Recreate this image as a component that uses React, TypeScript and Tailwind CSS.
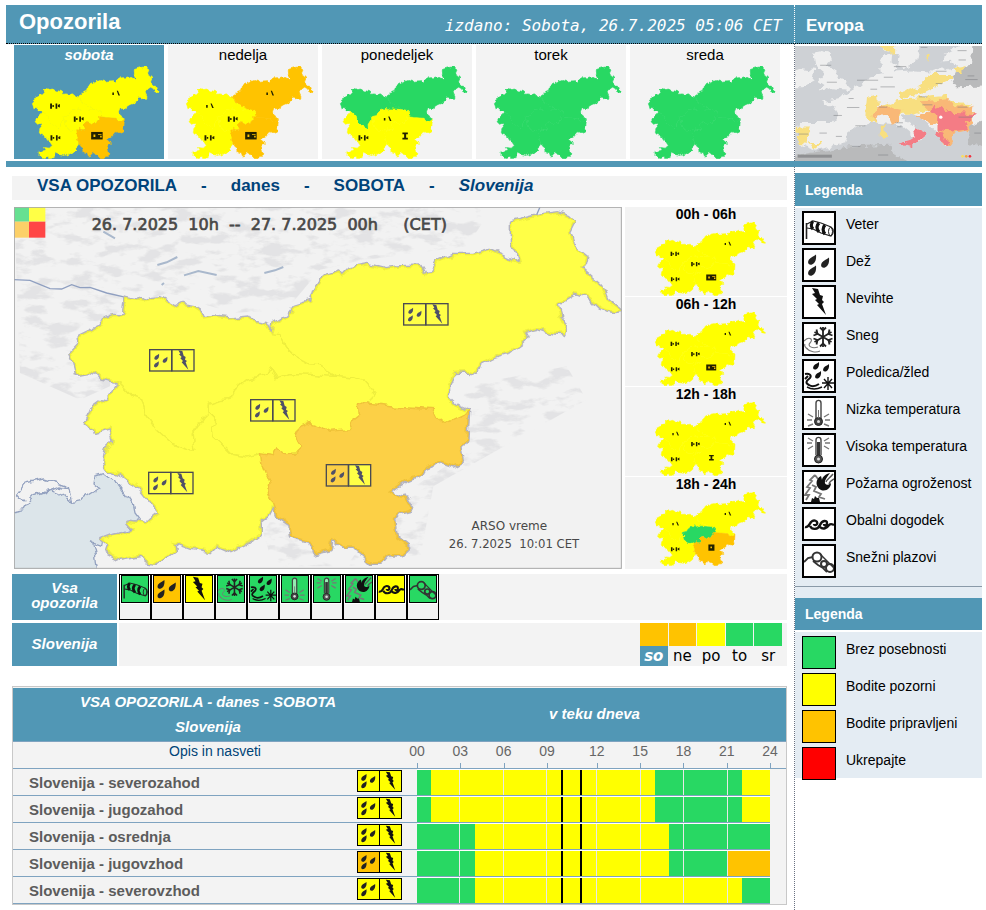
import { useId } from 'react'
import type { ReactNode } from 'react'

type Level = 'green' | 'yellow' | 'orange' | 'red'
type RegionId = 'nw' | 'sw' | 'c' | 'se' | 'ne'
type Mark = 'pair' | 'dots' | 'box' | 'beam' | 'square'

const FILL: Record<Level, string> = {
  green: '#28d863',
  yellow: '#ffff00',
  orange: '#ffc300',
  red: '#ff0000',
}

const SOFT_FILL: Record<Level, string> = {
  green: '#66e091',
  yellow: '#ffff46',
  orange: '#fcd046',
  red: '#ff4646',
}

const BG: Record<Level, string> = {
  green: 'bg-[#28d863]',
  yellow: 'bg-[#ffff00]',
  orange: 'bg-[#ffc300]',
  red: 'bg-[#ff0000]',
}

const REGION_PATHS: Record<RegionId, string> = {
  nw: 'M378 293L430 305L450 297L485 295L535 322L550 315L582 322L598 332L608 355L640 350L690 356L745 350L755 365L798 372L815 402L840 405L860 445L885 470L925 492L960 495L995 517L1000 530L930 524L870 522L830 535L808 500L795 525L740 540L705 570L690 600L660 603L625 615L625 640L610 655L580 700L585 752L560 750L520 735L470 690L435 640L425 600L395 590L352 545L305 535L290 520L260 515L230 520L222 490L210 462L240 430L238 410L300 380L315 355L345 348L370 350Z',
  ne: 'M815 402L822 375L860 352L885 320L935 305L945 270L970 230L1015 215L1025 230L1050 205L1105 195L1155 208L1200 202L1260 200L1275 225L1295 222L1315 185L1360 165L1420 165L1470 150L1515 170L1558 190L1550 160L1535 130L1535 70L1590 55L1630 45L1670 40L1705 50L1722 65L1705 100L1715 135L1735 150L1760 170L1755 190L1742 205L1805 260L1820 300L1860 332L1840 335L1800 325L1770 295L1730 280L1700 298L1670 315L1680 350L1698 385L1690 402L1650 397L1615 385L1570 395L1580 415L1560 435L1530 455L1480 470L1440 490L1430 520L1400 516L1365 518L1345 560L1345 595L1370 618L1405 635L1400 640L1335 670L1310 650L1300 630L1265 628L1180 622L1090 612L1110 610L1125 580L1095 545L1060 535L1000 530L995 517L960 495L925 492L885 470L860 445L840 405Z',
  c: 'M625 615L660 603L690 600L705 570L740 540L795 525L808 500L830 535L870 522L930 524L1000 530L1060 535L1095 545L1125 580L1110 610L1075 620L1078 645L1060 660L1045 690L990 695L965 680L930 668L900 680L885 710L905 745L890 760L855 762L830 745L820 768L782 762L740 772L700 765L680 745L640 710L635 680L650 665L625 640Z',
  sw: 'M352 545L395 590L425 600L435 640L470 690L520 735L560 750L585 752L580 700L610 655L625 640L650 665L635 680L640 710L680 745L700 765L740 772L782 762L785 790L810 850L805 880L820 915L805 945L780 965L780 1000L740 1030L690 1055L650 1037L632 1055L575 1045L520 1025L525 1050L500 1070L465 1090L435 1085L425 1065L360 1078L318 1055L325 1035L305 1020L330 1010L380 1000L400 990L378 965L440 972L480 940L440 890L420 865L365 825L325 810L312 790L320 745L340 725L330 685L290 697L258 670L275 630L330 590L352 560Z',
  se: 'M782 762L820 768L830 745L855 762L890 760L905 745L885 710L900 680L930 668L965 680L990 695L1045 690L1060 660L1078 645L1075 620L1090 612L1180 622L1265 628L1300 630L1310 650L1335 670L1405 637L1400 720L1385 745L1392 780L1360 798L1325 785L1275 805L1265 822L1220 840L1170 878L1195 895L1215 885L1240 928L1195 940L1180 960L1188 1010L1228 1042L1205 1065L1165 1065L1145 1090L1110 1090L1065 1045L1040 1045L995 1020L990 1050L945 1062L930 1025L875 1010L870 975L832 950L820 915L805 880L810 850L785 790Z',
}

const REGION_IDS: RegionId[] = ['nw', 'ne', 'c', 'sw', 'se']

const MARK_POS: Record<RegionId, [number, number]> = {
  nw: [515, 490],
  ne: [1290, 345],
  c: [820, 638],
  sw: [520, 855],
  se: [1055, 830],
}

const all = (l: Level): Record<RegionId, Level> => ({ nw: l, ne: l, c: l, sw: l, se: l })

function MarkShape({ kind, at }: { kind: Mark; at: [number, number] }) {
  return (
    <g transform={`translate(${at[0]} ${at[1]})`} fill="#222200">
      {kind === 'pair' ? (
        <path d="M-64 -30h24v60h-24zM-34 -12h18v22h-18zM6 -30h22v60h-22zM36 -12l26 -12v40l-26 -10z" />
      ) : null}
      {kind === 'dots' ? <path d="M-38 -12h20v30h-20zM18 -30h16l26 52h-20z" /> : null}
      {kind === 'box' ? (
        <>
          <path d="M-76 -44h148v86h-148z" />
          <path d="M-46 -14h24v28h-24zM12 -18h46v10h-46zM40 0h20v20h-20z" fill="#ffc300" />
        </>
      ) : null}
      {kind === 'beam' ? <path d="M-34 -38h70v20h-22v40h22v20h-70v-20h22v-40h-22z" /> : null}
      {kind === 'square' ? (
        <>
          <path d="M-44 -44h90v90h-90z" />
          <path d="M-14 -14h24v24h-24z" fill="#ffc300" />
        </>
      ) : null}
    </g>
  )
}

function MiniMap({
  levels,
  marks = {},
  className,
}: {
  levels: Record<RegionId, Level>
  marks?: Partial<Record<RegionId, Mark>>
  className: string
}) {
  const id = useId()
  return (
    <svg viewBox="205 30 1660 1066" preserveAspectRatio="none" className={className} aria-hidden="true">
      <defs>
        <filter id={id} colorInterpolationFilters="sRGB">
          <feTurbulence type="fractalNoise" baseFrequency="0.016" numOctaves="2" seed="4" />
          <feDisplacementMap in="SourceGraphic" scale="50" xChannelSelector="R" yChannelSelector="G" />
        </filter>
      </defs>
      <g filter={`url(#${id})`}>
        {REGION_IDS.map((r) => (
          <path key={r} d={REGION_PATHS[r]} fill={FILL[levels[r]]} stroke={FILL[levels[r]]} strokeWidth="8" />
        ))}
      </g>
      {REGION_IDS.map((r) => {
        const kind = marks[r]
        return kind ? <MarkShape key={r} kind={kind} at={MARK_POS[r]} /> : null
      })}
    </svg>
  )
}

const DROP = 'M4 -5.5C4.5 -1 3.5 3 0 4.5C-3.5 5.5 -5 2.5 -3 -0.5C-1 -3 2 -3.5 4 -5.5Z'

const ICONS: Record<string, ReactNode> = {
  wind: (
    <>
      <path d="M2.5 10V26" stroke="#222" strokeWidth="1.6" />
      <path d="M3 11L9 8L17 10L27 14C30 16 30 21 27 23L17 20L9 16L3 15" fill="none" stroke="#222" strokeWidth="1.2" />
      <path d="M9 8.5C6.5 10.5 7 14 9 16M15 10C12.5 12.5 12.5 16 15 19M21 12C18.5 14.5 18.5 18.5 21 21" fill="none" stroke="#111" strokeWidth="3.2" />
      <ellipse cx="26.5" cy="18.5" rx="2" ry="4" fill="none" stroke="#222" />
    </>
  ),
  rain: (
    <g fill="#222">
      <path d={DROP} transform="translate(8 10)" />
      <path d={DROP} transform="translate(21 13)" />
      <path d={DROP} transform="translate(8 21)" />
    </g>
  ),
  storm: <path d="M8 1L14 2L16 8L19 9L18 13L20 15L18 17L22 28L13 18L15 17L11 13L13 12L8 7L11 6Z" fill="#111" />,
  snow: (
    <>
      <path d="M0 17C5 12 10 15 6 19C3 22 8 25 14 23M2 24C6 28 12 29 16 27M1 20C0 22 2 24 4 25" fill="none" stroke="#777" strokeWidth="1.1" />
      <g stroke="#222" strokeWidth="1.8" fill="none">
        <path d="M19 3V23M10.5 8L27.5 18M10.5 18L27.5 8" />
        <path d="M16 3.5L19 6.5L22 3.5M16 22.5L19 19.5L22 22.5M9.5 11.5L13.5 10L12.5 5.5M28.5 14.5L24.5 16L25.5 20.5M9.5 14.5L13.5 16L12.5 20.5M28.5 11.5L24.5 10L25.5 5.5" />
      </g>
    </>
  ),
  ice: (
    <>
      <g fill="#111">
        <path d={DROP} transform="translate(12 5) scale(0.75)" />
        <path d={DROP} transform="translate(22 7) scale(0.75)" />
        <path d={DROP} transform="translate(14 14) scale(0.75)" />
      </g>
      <path d="M1 13C5 12 8 14 6 17C2 20 1 22 5 24C8 26 12 25 15 23M1 18L4 15" fill="none" stroke="#111" strokeWidth="2" />
      <path d="M3 26C8 29 14 28 18 26" fill="none" stroke="#111" strokeWidth="1.5" />
      <path d="M24 16V29M18 22H30M20 18L28 27M28 18L20 27" stroke="#111" strokeWidth="1.4" />
    </>
  ),
  cold: (
    <>
      <path d="M12 20V5C12 1.5 17 1.5 17 5V20" fill="#fff" fillOpacity="0.5" stroke="#444" strokeWidth="1.4" />
      <circle cx="14.5" cy="23.500" r="4" fill="#444" stroke="#222" />
      <circle cx="14.5" cy="23.500" r="1.5" fill="#ddd" />
      <path d="M14.5 12V20" stroke="#777" />
      <path d="M4 16L9 19M3 22H8M4 28L9 26M25 16L20 19M26 22H21M25 28L20 26" stroke="#777" strokeWidth="1.4" />
    </>
  ),
  hot: (
    <>
      <path d="M12 20V5C12 1.5 17 1.5 17 5V20" fill="#fff" fillOpacity="0.5" stroke="#444" strokeWidth="1.4" />
      <path d="M14.5 7V21" stroke="#333" strokeWidth="3" />
      <circle cx="14.5" cy="24" r="4" fill="#555" stroke="#222" />
      <circle cx="14.5" cy="24" r="1.5" fill="#ddd" />
      <path d="M4 3L9 6M3 8H8M4 14L9 11M25 3L20 6M26 8H21M25 14L20 11" stroke="#777" strokeWidth="1.4" />
    </>
  ),
  fire: (
    <>
      <path d="M11 3L6 8L8 9L3 15L6 16L1 23L5 23L2 28M11 3L14 7M8 13L12 15L10 19L17 22L15 25L21 27" fill="none" stroke="#777" strokeWidth="1.8" />
      <path d="M7 30L8 26L10 27L11 24L13 26L15 26L16 30Z" fill="#111" />
      <path d="M17 4C11 7 11 15 17 18C22 20 27 16 27 11C24 14 20 13 21 9C22 6 24 4 26 1C22 2 18 5 18 8Z" fill="#111" />
      <path d="M22 10C23 7 26 6 29 2M25 12C26 9 28 8 30 7" fill="none" stroke="#555" strokeWidth="1.4" />
    </>
  ),
  coast: (
    <path d="M1 18C4 19 5 16 7 13C10 10 14 12 13 15C12 17 10 16 10 15M6 17C8 21 14 21 16 16C18 11 23 11 23 14C23 17 20 17 20 15M16 18C19 21 23 19 25 16C26 15 28 15 30 16" fill="none" stroke="#111" strokeWidth="2.4" />
  ),
  avalanche: (
    <g fill="none" stroke="#333">
      <path d="M0 16L4 12L9 11M9 15L14 19L19 22L23 26" strokeWidth="1.8" />
      <circle cx="13" cy="11" r="4.5" strokeWidth="2" />
      <circle cx="20" cy="18" r="3" strokeWidth="2" />
      <circle cx="26" cy="22" r="4" strokeWidth="2" />
      <path d="M16 8L30 22" strokeWidth="1.4" />
    </g>
  ),
}

function HazardIcon({ name, className }: { name: string; className: string }) {
  return (
    <svg viewBox="0 0 30 30" className={className} aria-hidden="true">
      {ICONS[name]}
    </svg>
  )
}

function MapBadge({ x, y, rain = 'yellow' }: { x: number; y: number; rain?: Level }) {
  return (
    <g transform={`translate(${x} ${y})`} stroke="#4b4b52" strokeWidth="4">
      <rect width="66" height="64" fill={SOFT_FILL[rain]} />
      <rect x="67" width="66" height="64" fill={SOFT_FILL.yellow} />
      <g fill="#4f5068" stroke="none">
        <path d={DROP} transform="translate(21 22) scale(1.8)" />
        <path d={DROP} transform="translate(46 31) scale(1.8)" />
        <path d={DROP} transform="translate(20 45) scale(1.8)" />
        <path d="M86 2L98 4L102 18L108 22L106 30L112 34L108 38L116 60L96 38L100 34L92 26L96 22L88 14L92 12Z" />
      </g>
    </g>
  )
}

function BigMap() {
  const levels: Record<RegionId, Level> = { ...all('yellow'), se: 'orange' }
  return (
    <svg viewBox="42 22 1824 1086" className="block w-full" role="img" aria-label="Karta opozoril za Slovenijo">
      <defs>
        <filter id="coastline" colorInterpolationFilters="sRGB">
          <feTurbulence type="fractalNoise" baseFrequency="0.03" numOctaves="2" seed="7" />
          <feDisplacementMap in="SourceGraphic" scale="26" xChannelSelector="R" yChannelSelector="G" />
        </filter>
        <filter id="relief" colorInterpolationFilters="sRGB">
          <feTurbulence type="fractalNoise" baseFrequency="0.014 0.03" numOctaves="4" seed="11" result="noise" />
          <feColorMatrix in="noise" values="0 0 0 0 0.84  0 0 0 0 0.84  0 0 0 0 0.85  6 0 0 0 -2.9" result="shade" />
          <feComposite in="shade" in2="SourceGraphic" operator="in" />
        </filter>
      </defs>
      <rect x="42" y="22" width="1824" height="1086" fill="#f2f2f2" />
      <g filter="url(#relief)" opacity="0.5">
        <path d="M42 22H1480L1400 140L1100 180L960 210L860 330L700 340L500 280L350 340L330 560L240 600L60 520Z" />
        <path d="M820 1100L790 1000L830 930L900 1030L1000 1100Z" />
        <path d="M1040 1100L1180 900L1400 760L1390 560L1700 500L1760 600L1300 860L1260 1080Z" />
      </g>
      <g fill="none" stroke="#a9b8cc" strokeWidth="6">
        <path d="M472 196L500 188L532 172M552 227L595 214L650 226M793 220L825 212L850 202M485 256L492 250M310 96L345 116" />
      </g>
      <path d="M42 240L90 242L150 267L185 268L215 255L240 264L270 263L320 280L378 293M1608 50L1620 22M1850 332L1866 333" fill="none" stroke="#8f9fc0" strokeWidth="4" />
      <g filter="url(#coastline)">
        <path d="M30 937L70 930L85 905L100 890L150 872L185 885L215 905L245 900L300 865L282 850L285 830L310 822L360 860L400 915L405 940L420 960L380 970L390 990L310 1015L305 1040L275 1030L285 1075L290 1120H30Z" fill="#dce5ea" stroke="#94a2c0" strokeWidth="4" />
        <path d="M70 905L52 885L75 850L130 838L170 850L205 862L215 905M110 880L150 872L180 862L205 868M175 885L190 892" fill="none" stroke="#94a2c0" strokeWidth="4" />
        {REGION_IDS.map((r) => (
          <path key={r} d={REGION_PATHS[r]} fill="none" stroke="#b3b3c0" strokeWidth="12" strokeLinejoin="round" />
        ))}
        {REGION_IDS.map((r) => (
          <path key={r} d={REGION_PATHS[r]} fill={SOFT_FILL[levels[r]]} stroke={r === 'se' ? '#efc238' : '#eeee3e'} strokeWidth="4" />
        ))}
      </g>
      <MapBadge x={449} y={450} />
      <MapBadge x={752} y={600} />
      <MapBadge x={446} y={818} />
      <MapBadge x={1211} y={312} />
      <MapBadge x={979} y={795} rain="orange" />
      <g>
        <rect x="42" y="22" width="45" height="44" fill="#66e091" />
        <rect x="87" y="22" width="49" height="44" fill="#ffff46" />
        <rect x="42" y="66" width="45" height="48" fill="#fcd068" />
        <rect x="87" y="66" width="49" height="48" fill="#ff4646" />
      </g>
      <g className="font-['DejaVu_Sans',sans-serif]" fill="#484848">
        <text x="275" y="92" fontSize="48" stroke="#484848" strokeWidth="2">
          {'26. 7.2025\u00a0 10h\u00a0 --\u00a0 27. 7.2025\u00a0 00h\u00a0 \u00a0 \u00a0(CET)'}
        </text>
        <text x="1528" y="990" fontSize="36" textAnchor="middle">
          ARSO vreme
        </text>
        <text x="1542" y="1046" fontSize="35" textAnchor="middle">
          {'26. 7.2025\u00a0 10:01 CET'}
        </text>
      </g>
      <rect x="43" y="23" width="1821" height="1083" fill="none" stroke="#a8a8a8" strokeWidth="3" />
    </svg>
  )
}

function EuropeMap() {
  return (
    <svg viewBox="930 138 558 346" preserveAspectRatio="none" className="block h-[115px] w-full" role="img" aria-label="Evropa">
      <defs>
        <filter id="shores" colorInterpolationFilters="sRGB">
          <feTurbulence type="fractalNoise" baseFrequency="0.05" numOctaves="2" seed="3" />
          <feDisplacementMap in="SourceGraphic" scale="26" xChannelSelector="R" yChannelSelector="G" />
        </filter>
      </defs>
      <rect x="930" y="138" width="558" height="346" fill="#ced1d5" />
      <g filter="url(#shores)">
        <g fill="#efefef">
          <path d="M985 155L1010 150L1032 155L1040 178L1022 198L1048 215L1060 235L1090 245L1085 270L1040 265L1000 275L1018 252L1000 240L1015 220L990 200Z" />
          <path d="M930 212L950 205L990 210L985 245L950 262L930 262Z" />
          <path d="M1200 165L1220 160L1218 185L1235 200L1225 215L1280 212L1340 215L1370 205L1400 215L1420 195L1410 185L1368 188L1370 165L1400 150L1440 130H1500V360L1440 380L1410 395L1385 400L1390 435L1375 435L1350 395L1330 375L1290 345L1262 345L1255 360L1290 385L1320 400L1300 425L1285 410L1250 380L1215 370L1160 365L1110 385L1090 400L1080 430L1040 440L990 450L935 430L942 370L1040 370L1060 345L1045 320L1010 305L1060 295L1100 270L1130 255L1150 230L1190 220L1185 190Z" />
          <path d="M1175 125H1305L1295 180L1260 205L1235 195L1240 165L1200 150Z" />
        </g>
        <g fill="#b9babb">
          <path d="M1398 225L1455 195L1460 125H1500V260L1410 262Z" />
          <path d="M915 470L1090 440L1215 435L1225 465L1300 500H915Z" />
          <path d="M1445 380L1500 358V440L1450 430Z" />
        </g>
        <g fill="#f8df80">
          <path d="M1330 222L1395 222L1396 240L1340 265L1310 280L1245 292L1240 278L1300 260Z" />
          <path d="M1405 205L1440 198L1425 222ZM1175 130H1230L1228 165L1200 148ZM942 380L975 380L968 405L972 435L935 432ZM975 430L1008 430L985 448ZM1186 372L1198 372L1203 410L1186 414ZM1325 165L1336 162L1326 180Z" />
          <path d="M1145 290L1175 285L1180 340L1165 370L1140 345Z" />
          <path d="M1180 322L1225 305L1260 295L1330 290L1385 285L1388 305L1455 310L1450 330L1330 330L1280 345L1250 345L1200 345Z" />
        </g>
        <g fill="#f9b877">
          <path d="M1165 340L1185 315L1215 325L1250 330L1240 368L1218 375L1205 345L1165 360Z" />
          <path d="M1300 305L1385 298L1400 315L1462 320L1460 350L1450 390L1405 400L1392 440L1370 430L1350 375L1290 350L1330 335Z" />
        </g>
        <g fill="#f47c85">
          <path d="M1330 330L1350 315L1385 338L1470 343L1440 370L1446 388L1400 395L1352 390L1355 350Z" />
          <path d="M1285 380L1300 390L1325 398L1300 420L1280 440L1242 430L1275 420L1293 408ZM1350 395L1372 398L1388 437L1365 425Z" />
        </g>
      </g>
      <path d="M1005 196H1038M1025 247H1055M1115 241H1178M1185 261H1228M1195 232H1222M1085 323H1122M1045 347H1070M1180 322H1205M1225 200H1262M1230 369H1252M1235 381H1248M1350 214H1382M1350 251H1370M1310 315H1340M1300 291H1325M1415 322H1445M1445 228H1465M1438 239H1475M1418 352H1460M1003 400H1025M940 403H970M1100 440H1125M1178 466H1208M1140 378H1110M1052 410H1070M1155 268H1175M1305 142H1325M1415 152H1442M1418 180H1440M1090 296H1105M1465 400H1485" stroke="#77797c" strokeWidth="1.5" />
      <circle cx="1365" cy="352" r="5" fill="#fff" />
      <rect x="938" y="465" width="102" height="9" fill="#8f9092" />
      <circle cx="1430" cy="470" r="4" fill="#f8df60" />
      <circle cx="1441" cy="470" r="4" fill="#f9a23c" />
      <circle cx="1452" cy="470" r="4" fill="#f03040" />
    </svg>
  )
}

const days: { name: string; levels: Record<RegionId, Level>; marks: Partial<Record<RegionId, Mark>> }[] = [
  {
    name: 'sobota',
    levels: { ...all('yellow'), se: 'orange' },
    marks: { nw: 'pair', ne: 'dots', c: 'pair', sw: 'pair', se: 'box' },
  },
  {
    name: 'nedelja',
    levels: { ...all('yellow'), ne: 'orange', se: 'orange' },
    marks: { nw: 'dots', ne: 'dots', c: 'pair', sw: 'pair', se: 'box' },
  },
  {
    name: 'ponedeljek',
    levels: { nw: 'green', ne: 'green', c: 'yellow', sw: 'yellow', se: 'yellow' },
    marks: { c: 'dots', sw: 'pair', se: 'beam' },
  },
  { name: 'torek', levels: all('green'), marks: {} },
  { name: 'sreda', levels: all('green'), marks: {} },
]

const periods: { name: string; levels: Record<RegionId, Level>; marks: Partial<Record<RegionId, Mark>> }[] = [
  { name: '00h - 06h', levels: all('yellow'), marks: { nw: 'pair', ne: 'dots', c: 'pair', sw: 'pair', se: 'box' } },
  { name: '06h - 12h', levels: all('yellow'), marks: { nw: 'pair', ne: 'dots', c: 'pair', sw: 'pair', se: 'box' } },
  { name: '12h - 18h', levels: all('yellow'), marks: { nw: 'dots', ne: 'dots', c: 'pair', sw: 'pair', se: 'beam' } },
  {
    name: '18h - 24h',
    levels: { nw: 'yellow', ne: 'yellow', c: 'green', sw: 'yellow', se: 'orange' },
    marks: { nw: 'dots', ne: 'dots', sw: 'pair', se: 'square' },
  },
]

const hazards: { icon: string; label: string; level: Level }[] = [
  { icon: 'wind', label: 'Veter', level: 'green' },
  { icon: 'rain', label: 'Dež', level: 'orange' },
  { icon: 'storm', label: 'Nevihte', level: 'yellow' },
  { icon: 'snow', label: 'Sneg', level: 'green' },
  { icon: 'ice', label: 'Poledica/žled', level: 'green' },
  { icon: 'cold', label: 'Nizka temperatura', level: 'green' },
  { icon: 'hot', label: 'Visoka temperatura', level: 'green' },
  { icon: 'fire', label: 'Požarna ogroženost', level: 'green' },
  { icon: 'coast', label: 'Obalni dogodek', level: 'yellow' },
  { icon: 'avalanche', label: 'Snežni plazovi', level: 'green' },
]

const levelLegend: { level: Level; label: string }[] = [
  { level: 'green', label: 'Brez posebnosti' },
  { level: 'yellow', label: 'Bodite pozorni' },
  { level: 'orange', label: 'Bodite pripravljeni' },
  { level: 'red', label: 'Ukrepajte' },
]

const shortDays: { name: string; level: Level }[] = [
  { name: 'so', level: 'orange' },
  { name: 'ne', level: 'orange' },
  { name: 'po', level: 'yellow' },
  { name: 'to', level: 'green' },
  { name: 'sr', level: 'green' },
]

// each span: level and the hour it lasts until
const rows: { region: string; rain: Level; spans: [Level, number][] }[] = [
  { region: 'severozahod', rain: 'yellow', spans: [['green', 1], ['yellow', 16], ['green', 22], ['yellow', 24]] },
  { region: 'jugozahod', rain: 'yellow', spans: [['green', 1], ['yellow', 16], ['green', 22], ['yellow', 24]] },
  { region: 'osrednja', rain: 'yellow', spans: [['green', 4], ['yellow', 17], ['green', 24]] },
  { region: 'jugovzhod', rain: 'orange', spans: [['green', 4], ['yellow', 17], ['green', 21], ['orange', 24]] },
  { region: 'severovzhod', rain: 'yellow', spans: [['green', 4], ['yellow', 22], ['green', 24]] },
]

const HOURS = Array.from({ length: 24 }, (_, i) => i)
const NOW = 10

function hourLevel(spans: [Level, number][], hour: number): Level {
  return (spans.find(([, end]) => hour < end) ?? spans[0])[0]
}

function HourCell({ hour, level }: { hour: number; level: Level }) {
  if (hour === NOW) {
    return <div className={'h-[25px] w-[21px] shrink-0 border-x-2 border-black ' + BG[level]} />
  }
  return (
    <div
      className={
        'h-[25px] flex-1 ' + BG[level] + (hour % 3 === 0 && hour > 0 ? ' border-l border-[#e8e8e8]' : '')
      }
    />
  )
}

function HourScale() {
  return (
    <div className="flex h-[26px] text-sm leading-[18px] text-[#666]">
      {HOURS.map((h) => (
        <div
          key={h}
          className={'flex h-full flex-col justify-between ' + (h === NOW ? 'w-[21px] shrink-0' : 'w-0 flex-1')}
        >
          {h % 3 === 0 ? (
            <>
              <span className="-ml-2 w-4 text-center">{String(h).padStart(2, '0')}</span>
              <span className="h-[5px] w-px bg-[#7fa3c0]" />
            </>
          ) : null}
        </div>
      ))}
      <div className="flex h-full w-0 flex-col justify-between">
        <span className="-ml-2 w-4 text-center">24</span>
        <span className="h-[5px] w-px bg-[#7fa3c0]" />
      </div>
    </div>
  )
}

function Header() {
  return (
    <header>
      <div className="flex border-b border-dotted border-black bg-[#5197b5] text-white">
        <div className="flex h-[38px] flex-1 items-center justify-between pl-[13px] pr-3">
          <h1 className="pb-1 text-[22px] leading-7 font-bold">Opozorila</h1>
          <p className="pt-[3px] font-['DejaVu_Sans_Mono',monospace] text-base italic">
            izdano: Sobota, 26.7.2025 05:06 CET
          </p>
        </div>
        <h2 className="flex w-[188px] items-center border-l border-dotted border-white pt-[3px] pl-[11px] text-[17px] font-bold">
          Evropa
        </h2>
      </div>
      <div className="flex border-b-6 border-[#5197b5]">
        <nav className="flex flex-1 gap-1 pt-px pr-[14px] pb-[2px] pl-2">
          {days.map((d, i) => (
            <a
              key={d.name}
              href={'#' + d.name}
              className={
                'flex flex-1 flex-col items-center text-[15px] leading-5 ' +
                (i === 0 ? 'bg-[#5197b5] font-bold text-white italic' : 'bg-[#f3f3f3] text-black')
              }
            >
              {d.name}
              <MiniMap levels={d.levels} marks={d.marks} className="mt-px ml-[12px] h-[93px] w-[129px]" />
            </a>
          ))}
        </nav>
        <a href="#evropa" className="w-[188px] border-l border-dotted border-gray-500 pt-[2px]">
          <EuropeMap />
        </a>
      </div>
    </header>
  )
}

function TodayTable() {
  return (
    <div className="mt-5 border border-[#c8c8c8] bg-[#f3f3f3] pt-px">
      <table className="w-full table-fixed border-collapse">
        <colgroup>
          <col className="w-[344px]" />
          <col className="w-[46px]" />
          <col />
        </colgroup>
        <thead>
          <tr className="border-b border-[#7fa3c0] bg-[#5197b5] text-[15px] text-white italic">
            <th colSpan={2} className="h-[53px] leading-[25px] font-bold">
              VSA OPOZORILA - danes - SOBOTA
              <br />
              Slovenija
            </th>
            <th className="font-bold">v teku dneva</th>
          </tr>
          <tr className="border-b border-[#7fa3c0]">
            <th colSpan={2} className="p-0 pl-[14px] align-top text-sm leading-[18px] font-normal text-[#004477]">
              Opis in nasveti
            </th>
            <th className="p-0 pr-4 pl-[14px] font-normal">
              <HourScale />
            </th>
          </tr>
        </thead>
        <tbody>
          {rows.map((r) => (
            <tr key={r.region}>
              <th
                scope="row"
                className="border-b border-[#7fa3c0] p-0 pt-px pl-4 text-left text-[15px] leading-[25px] font-bold text-[#5c5c5c]"
              >
                Slovenija - {r.region}
              </th>
              <td className="border-b border-[#7fa3c0] p-0 pt-px align-top">
                <div className="flex w-[45px] border border-black">
                  <HazardIcon name="rain" className={'h-5 flex-1 ' + BG[r.rain]} />
                  <HazardIcon name="storm" className="h-5 flex-1 border-l border-black bg-[#ffff00]" />
                </div>
              </td>
              <td className="p-0 pr-4">
                <div className="flex border-b border-[#7fa3c0] pl-[14px]">
                  <div className="flex flex-1 border-t border-white">
                    {HOURS.map((h) => (
                      <HourCell key={h} hour={h} level={hourLevel(r.spans, h)} />
                    ))}
                  </div>
                </div>
              </td>
            </tr>
          ))}
        </tbody>
      </table>
    </div>
  )
}

function Main() {
  return (
    <main className="min-w-0 flex-1 pt-[9px] pr-[7px] pb-[5px] pl-[6px]">
      <h2 className="flex h-6 items-center bg-[#f3f3f3] pb-1 pl-[25px] text-[17px] font-bold text-[#00437a]">
        <span>VSA OPOZORILA</span>
        <span className="px-6">-</span>
        <span>danes</span>
        <span className="px-6">-</span>
        <span>SOBOTA</span>
        <span className="px-6">-</span>
        <em>Slovenija</em>
      </h2>

      <div className="mt-[7px] flex gap-[3px] pl-[2px]">
        <div className="min-w-0 flex-1">
          <BigMap />
        </div>
        <div className="flex w-[162px] flex-col gap-px">
          {periods.map((p) => (
            <a
              key={p.name}
              href={'#' + p.name.replace(/ /g, '')}
              className="flex flex-col items-center bg-[#f3f3f3] text-sm leading-[15px] font-bold text-black last:flex-1"
            >
              {p.name}
              <MiniMap levels={p.levels} marks={p.marks} className="ml-2 h-[74px] w-[112px]" />
            </a>
          ))}
        </div>
      </div>

      <div className="mt-[5px] flex gap-[2px]">
        <h3 className="flex w-[105px] items-center justify-center bg-[#5197b5] px-3 pb-1 text-center text-[15px] leading-[15px] font-bold text-white italic">
          Vsa opozorila
        </h3>
        <div className="flex flex-1 bg-[#f3f3f3]">
          {hazards.map((h) => (
            <button
              key={h.icon}
              type="button"
              aria-label={h.label}
              className="flex h-[46px] w-8 flex-col border border-black bg-white"
            >
              <span className="flex w-full justify-center pb-px">
                <HazardIcon name={h.icon} className={'h-7 w-7 border border-black ' + BG[h.level]} />
              </span>
              <span className="w-full flex-1 bg-[#f3f3f3]" />
            </button>
          ))}
        </div>
      </div>

      <div className="mt-[3px] flex gap-[2px]">
        <h3 className="flex w-[105px] items-center justify-center bg-[#5197b5] text-[15px] font-bold text-white italic">
          Slovenija
        </h3>
        <div className="flex flex-1 justify-end bg-[#f3f3f3] pr-[5px]">
          <div className="flex w-[142px] gap-px">
            {shortDays.map((d, i) => (
              <a
                key={d.name}
                href={'#' + d.name}
                className="flex-1 text-center font-['DejaVu_Sans',sans-serif] text-[15px] leading-5 text-black"
              >
                <span className={'block h-[23px] ' + BG[d.level]} />
                <span className={'block ' + (i === 0 ? 'bg-[#5197b5] font-bold text-white italic' : '')}>{d.name}</span>
              </a>
            ))}
          </div>
        </div>
      </div>

      <TodayTable />
    </main>
  )
}

function Sidebar() {
  return (
    <aside className="w-[188px] shrink-0 border-l border-dotted border-gray-500 pt-[6px] text-sm text-black">
      <h2 className="flex h-[33px] items-center bg-[#5197b5] pl-[10px] font-bold text-white">Legenda</h2>
      <ul className="mt-[2px] flex flex-col gap-[3px] border-b border-[#8a9aa8] bg-[#e4ecf3] pt-[3px] pb-2 pl-[7px]">
        {hazards.map((h) => (
          <li key={h.icon} className="flex gap-[10px]">
            <HazardIcon name={h.icon} className="h-[34px] w-[34px] shrink-0 border-2 border-black bg-white" />
            <span className="pt-[3px]">{h.label}</span>
          </li>
        ))}
      </ul>
      <div className="h-[11px] bg-[#e4ecf3]" />
      <h2 className="flex h-8 items-center bg-[#5197b5] pl-[10px] font-bold text-white">Legenda</h2>
      <ul className="mt-[2px] flex h-[146px] flex-col gap-[4px] bg-[#e4ecf3] pt-1 pl-[7px]">
        {levelLegend.map((l) => (
          <li key={l.label} className="flex gap-[10px]">
            <span className={'h-[33px] w-[34px] shrink-0 border border-black ' + BG[l.level]} />
            <span className="pt-[3px]">{l.label}</span>
          </li>
        ))}
      </ul>
    </aside>
  )
}

export default function App() {
  return (
    <div className="bg-white pt-[5px] pr-1 pl-[6px] font-['Liberation_Sans',Arial,sans-serif]">
      <Header />
      <div className="flex">
        <Main />
        <Sidebar />
      </div>
    </div>
  )
}
